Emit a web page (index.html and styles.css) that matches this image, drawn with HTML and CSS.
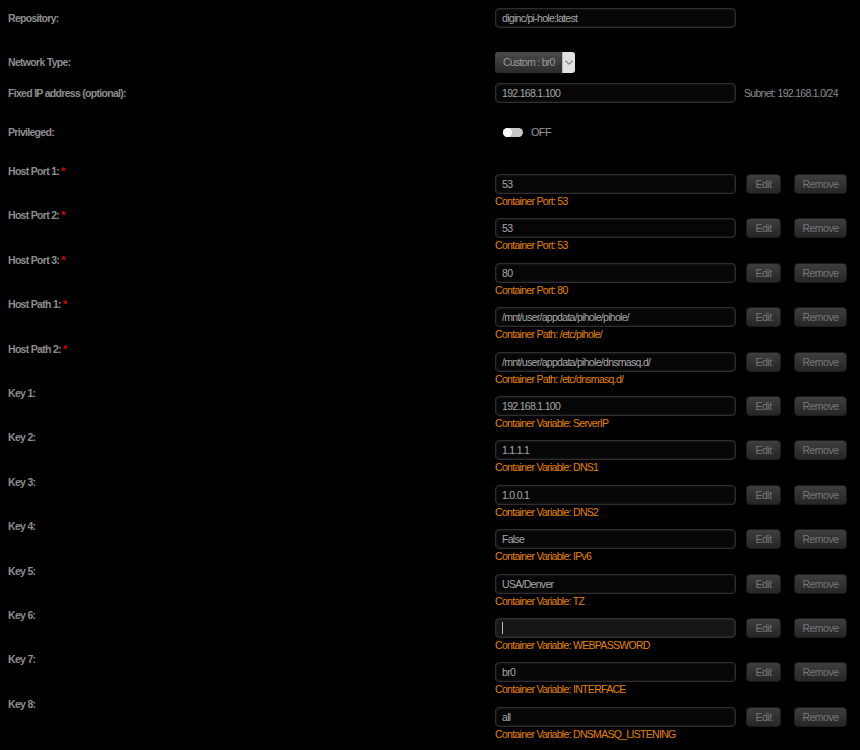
FILE: index.html
```html
<!DOCTYPE html>
<html lang="en">
<head>
  <meta charset="UTF-8" />
  <title>Update Container - pihole</title>
  <link rel="stylesheet" href="styles.css">
</head>
<body>
  <form class="template">
    <div class="row top repo">
      <div class="label">Repository:</div>
      <div class="field"><input class="text" type="text" value="diginc/pi-hole:latest" /></div>
    </div>

    <div class="row top net">
      <div class="label">Network Type:</div>
      <div class="field">
        <div class="select">
          <span class="select-value">Custom : br0</span>
          <span class="select-arrow">
            <svg width="8" height="5" viewBox="0 0 8 5"><path d="M0.5 0.8 L4 4.2 L7.5 0.8" fill="none" stroke="#888" stroke-width="1.2"/></svg>
          </span>
        </div>
      </div>
    </div>

    <div class="row top ip">
      <div class="label">Fixed IP address (optional):</div>
      <div class="field">
        <input class="text" type="text" value="192.168.1.100" />
        <span class="note">Subnet: 192.168.1.0/24</span>
      </div>
    </div>

    <div class="row top priv">
      <div class="label">Privileged:</div>
      <div class="field">
        <span class="switch"><span class="knob"></span></span>
        <span class="switch-text">OFF</span>
      </div>
    </div>

    <div class="row config">
      <div class="label">Host Port 1: <span class="req">*</span></div>
      <div class="field">
        <div class="line"><input class="text" type="text" value="53" /><button type="button" class="btn edit">Edit</button><button type="button" class="btn remove">Remove</button></div>
        <div class="desc">Container Port: 53</div>
      </div>
    </div>

    <div class="row config">
      <div class="label">Host Port 2: <span class="req">*</span></div>
      <div class="field">
        <div class="line"><input class="text" type="text" value="53" /><button type="button" class="btn edit">Edit</button><button type="button" class="btn remove">Remove</button></div>
        <div class="desc">Container Port: 53</div>
      </div>
    </div>

    <div class="row config">
      <div class="label">Host Port 3: <span class="req">*</span></div>
      <div class="field">
        <div class="line"><input class="text" type="text" value="80" /><button type="button" class="btn edit">Edit</button><button type="button" class="btn remove">Remove</button></div>
        <div class="desc">Container Port: 80</div>
      </div>
    </div>

    <div class="row config">
      <div class="label">Host Path 1: <span class="req">*</span></div>
      <div class="field">
        <div class="line"><input class="text" type="text" value="/mnt/user/appdata/pihole/pihole/" /><button type="button" class="btn edit">Edit</button><button type="button" class="btn remove">Remove</button></div>
        <div class="desc">Container Path: /etc/pihole/</div>
      </div>
    </div>

    <div class="row config">
      <div class="label">Host Path 2: <span class="req">*</span></div>
      <div class="field">
        <div class="line"><input class="text" type="text" value="/mnt/user/appdata/pihole/dnsmasq.d/" /><button type="button" class="btn edit">Edit</button><button type="button" class="btn remove">Remove</button></div>
        <div class="desc">Container Path: /etc/dnsmasq.d/</div>
      </div>
    </div>

    <div class="row config">
      <div class="label">Key 1:</div>
      <div class="field">
        <div class="line"><input class="text" type="text" value="192.168.1.100" /><button type="button" class="btn edit">Edit</button><button type="button" class="btn remove">Remove</button></div>
        <div class="desc">Container Variable: ServerIP</div>
      </div>
    </div>

    <div class="row config">
      <div class="label">Key 2:</div>
      <div class="field">
        <div class="line"><input class="text" type="text" value="1.1.1.1" /><button type="button" class="btn edit">Edit</button><button type="button" class="btn remove">Remove</button></div>
        <div class="desc">Container Variable: DNS1</div>
      </div>
    </div>

    <div class="row config">
      <div class="label">Key 3:</div>
      <div class="field">
        <div class="line"><input class="text" type="text" value="1.0.0.1" /><button type="button" class="btn edit">Edit</button><button type="button" class="btn remove">Remove</button></div>
        <div class="desc">Container Variable: DNS2</div>
      </div>
    </div>

    <div class="row config">
      <div class="label">Key 4:</div>
      <div class="field">
        <div class="line"><input class="text" type="text" value="False" /><button type="button" class="btn edit">Edit</button><button type="button" class="btn remove">Remove</button></div>
        <div class="desc">Container Variable: IPv6</div>
      </div>
    </div>

    <div class="row config">
      <div class="label">Key 5:</div>
      <div class="field">
        <div class="line"><input class="text" type="text" value="USA/Denver" /><button type="button" class="btn edit">Edit</button><button type="button" class="btn remove">Remove</button></div>
        <div class="desc">Container Variable: TZ</div>
      </div>
    </div>

    <div class="row config">
      <div class="label">Key 6:</div>
      <div class="field">
        <div class="line"><span class="focus-wrap"><input class="text focused" type="password" value="" /><span class="caret"></span></span><button type="button" class="btn edit">Edit</button><button type="button" class="btn remove">Remove</button></div>
        <div class="desc">Container Variable: WEBPASSWORD</div>
      </div>
    </div>

    <div class="row config">
      <div class="label">Key 7:</div>
      <div class="field">
        <div class="line"><input class="text" type="text" value="br0" /><button type="button" class="btn edit">Edit</button><button type="button" class="btn remove">Remove</button></div>
        <div class="desc">Container Variable: INTERFACE</div>
      </div>
    </div>

    <div class="row config">
      <div class="label">Key 8:</div>
      <div class="field">
        <div class="line"><input class="text" type="text" value="all" /><button type="button" class="btn edit">Edit</button><button type="button" class="btn remove">Remove</button></div>
        <div class="desc">Container Variable: DNSMASQ_LISTENING</div>
      </div>
    </div>
  </form>
</body>
</html>
```

FILE: styles.css
```css
:root {
  --bg: #000000;
  --label: #8e8e8e;
  --text: #a8a8a8;
  --muted: #777777;
  --orange: #e48400;
  --red: #e00000;
  --font: "Liberation Sans", Arial, sans-serif;
}

body {
  margin: 0;
  background: var(--bg);
  color: var(--text);
  font-family: var(--font);
  font-size: 10.5px;
  letter-spacing: -0.7px;
}

.template {
  width: 860px;
  padding-top: 8px;
}

.row {
  display: flex;
}

.label {
  width: 487px;
  padding-left: 8px;
  font-weight: bold;
  color: var(--label);
  line-height: 14px;
  flex-shrink: 0;
}

.req {
  color: var(--red);
}

.field {
  display: flex;
  align-items: center;
}

/* top block: label and field share a centre line */
.row.top {
  height: 20px;
  align-items: center;
}

.row.repo { margin-bottom: 24px; }
.row.net { margin-bottom: 11px; }
.row.ip { margin-bottom: 19px; }
.row.priv { margin-bottom: 22px; }

.row.top .label {
  margin-top: -1px;
}

.text {
  box-sizing: border-box;
  width: 241px;
  height: 20px;
  margin: 0;
  padding: 0 6px;
  background: #060606;
  border: 1px solid #2e2e2e;
  border-radius: 4px;
  box-shadow: inset 0 0 3px rgba(70, 70, 70, 0.6);
  color: var(--text);
  font-family: var(--font);
  font-size: 10.5px;
  letter-spacing: -0.7px;
  outline: none;
}

.text.focused {
  background: #161616;
}

.note {
  margin-left: 8px;
  color: var(--label);
}

.select {
  display: flex;
  height: 21px;
  border-radius: 3px;
  overflow: hidden;
}

.select-value {
  box-sizing: border-box;
  display: flex;
  align-items: center;
  padding: 0 8px;
  width: 67px;
  white-space: nowrap;
  background: linear-gradient(#4a4a4a, #2b2b2b);
  color: #9a9a9a;
}

.select-arrow {
  display: flex;
  align-items: center;
  justify-content: center;
  width: 12px;
  background: #e2e2e2;
  border-left: 1px solid #bbb;
}

.switch {
  position: relative;
  margin-left: 8px;
  width: 20px;
  height: 9px;
  border-radius: 5px;
  background: #c8c8c8;
}

.knob {
  position: absolute;
  left: 0;
  top: 0;
  width: 9px;
  height: 9px;
  border-radius: 50%;
  background: #fafafa;
}

.switch-text {
  margin-left: 8px;
  color: #9a9a9a;
  font-size: 11px;
}

/* config rows: label on top line, input below it */
.row.config {
  height: 44.4px;
}

.row.config .field {
  flex-direction: column;
  align-items: flex-start;
  padding-top: 10px;
}

.line {
  display: flex;
  align-items: center;
}

.desc {
  color: var(--orange);
  line-height: 14px;
  white-space: nowrap;
}

.btn {
  box-sizing: border-box;
  height: 20px;
  margin: 0 0 0 10px;
  padding: 0;
  background: linear-gradient(#3e3e3e, #262626);
  border: 1px solid #1c1c1c;
  border-radius: 4px;
  color: var(--muted);
  font-family: var(--font);
  font-size: 10.5px;
  letter-spacing: -0.5px;
}

.btn.edit {
  width: 35px;
}

.btn.remove {
  width: 53px;
  margin-left: 13px;
}

.focus-wrap {
  position: relative;
  display: flex;
}

.caret {
  position: absolute;
  left: 7px;
  top: 4px;
  width: 1px;
  height: 12px;
  background: #bdbdbd;
}
```
